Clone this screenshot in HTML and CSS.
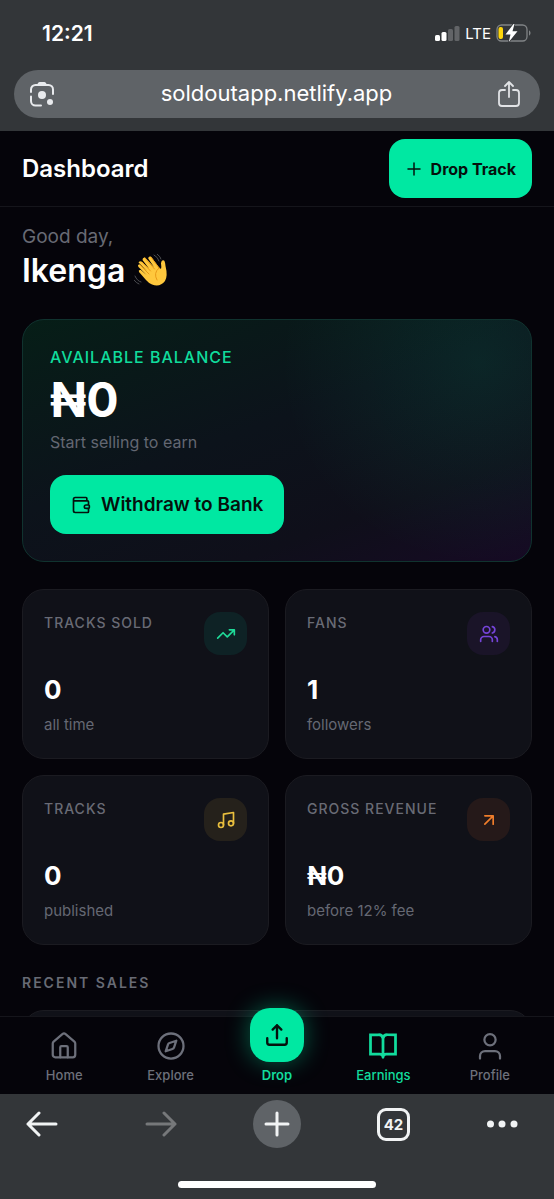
FILE: index.html
```html
<!DOCTYPE html>
<html lang="en">
<head>
<meta charset="utf-8">
<meta name="viewport" content="width=device-width, initial-scale=1">
<title>Dashboard</title>
<link rel="stylesheet" href="styles.css">
</head>
<body>
<div class="screen">
  <header class="browser-top">
    <div class="status">
      <time class="clock">12:21</time>
      <div class="signals">
        <svg width="25" height="16" viewBox="0 0 25 16" aria-hidden="true"><rect x="0" y="10" width="5" height="6" rx="1.5" fill="#fff"/><rect x="6.500" y="7" width="5" height="9" rx="1.500" fill="#fff"/><rect x="13" y="4" width="5" height="12" rx="1.500" fill="#626467"/><rect x="19.500" y="1" width="5" height="15" rx="1.500" fill="#626467"/></svg>
        <span>LTE</span>
        <svg width="36" height="18" viewBox="0 0 36 18" aria-hidden="true"><rect x="1" y="1" width="30" height="16" rx="4.500" fill="none" stroke="#818486" stroke-width="1.300"/><path d="M33 6.500c2 .6 2 4.400 0 5z" fill="#818486"/><rect x="2.500" y="3" width="4.500" height="12" rx="2" fill="#ffd60a"/><path d="M17.500 0 9.500 10.500h5L12.800 18l8.700-10.700h-5L18.500 0z" fill="#fff" stroke="#333639" stroke-width="1.500" paint-order="stroke"/></svg>
      </div>
    </div>
    <div class="address">
      <button class="bare" aria-label="Search with camera"><svg width="26" height="26" viewBox="0 0 26 26" fill="none" stroke="#e8eaed" stroke-width="2"><path d="M2 11V8.500A4.500 4.500 0 0 1 6.500 4h13A4.500 4.500 0 0 1 24 8.500V13M2 15.500V20a4.500 4.500 0 0 0 4.500 4.500H12" stroke-linecap="round"/><path d="M8 4q1-3 2.500-3h5Q17 1 18 4z" fill="#e8eaed" stroke="none"/><circle cx="13" cy="14" r="4" fill="#e8eaed" stroke="none"/><circle cx="21" cy="21" r="3" fill="#e8eaed" stroke="none"/></svg></button>
      <span class="url">soldoutapp.netlify.app</span>
      <button class="bare" aria-label="Share"><svg width="22" height="26" viewBox="0 0 22 26" fill="none" stroke="#e1e3e6" stroke-width="1.800" stroke-linecap="round" stroke-linejoin="round"><path d="M7 9H4a3 3 0 0 0-3 3v10a3 3 0 0 0 3 3h14a3 3 0 0 0 3-3V12a3 3 0 0 0-3-3h-3M11 16V1M7 5l4-4 4 4"/></svg></button>
    </div>
  </header>

  <header class="app-header">
    <h1>Dashboard</h1>
    <button class="primary drop-track"><svg width="18" height="18" viewBox="0 0 24 24" class="line"><path d="M4 12h16M12 4v16"/></svg>Drop Track</button>
  </header>

  <main class="content">
    <section class="greeting">
      <p>Good day,</p>
      <h2>Ikenga <svg class="wave" role="img" aria-label="waving hand" width="34" height="34" viewBox="0 0 34 34"><path d="M4.500 8.500Q6 6.500 8 8L15 14.500 8.500 6Q8.500 3 11 3.500L20 13 14.200 4.600Q14.500 1.800 17 2.800L25.500 14Q27.500 16 27.300 12.500L27 9.500Q27.500 5.500 30 6.500 31 7 31.500 12 34 22 31 27 26 33.500 18 30.500 15 29.500 12 26L5 18Q4 15.500 6.800 16L12.500 21 4.500 13Q3 10 6 10.500L14 17.500z" fill="#ffc83d"/><path d="m8 8 8.500 9M11 4l9.500 11M17 3l8 11M6 11l9 9M25 14q-6 5-2 12" fill="none" stroke="#e99a18" stroke-width="1" stroke-linecap="round"/><path d="M20 1q4 2 5 6M23 0q4 3 4 5M1 22q2 5 6 6M0 26q2 3 5 4" fill="none" stroke="#4b4c50" stroke-width="1" stroke-linecap="round"/></svg></h2>
    </section>

    <section class="balance">
      <h3>AVAILABLE BALANCE</h3>
      <p class="amount">₦0</p>
      <p class="note">Start selling to earn</p>
      <button class="primary withdraw"><svg width="20" height="20" viewBox="0 0 24 24" class="line"><path d="M19 7V4a1 1 0 0 0-1-1H5a2 2 0 0 0 0 4h15a1 1 0 0 1 1 1v4h-3a2 2 0 0 0 0 4h3a1 1 0 0 0 1-1v-2a1 1 0 0 0-1-1M3 5v14a2 2 0 0 0 2 2h15a1 1 0 0 0 1-1v-4"/></svg>Withdraw to Bank</button>
    </section>

    <section class="stats">
      <article class="card">
        <div class="card-head"><h3>TRACKS SOLD</h3><span class="badge green"><svg width="20" height="20" viewBox="0 0 24 24" class="line"><path d="m22 7-8.500 8.500-5-5L2 17M16 7h6v6"/></svg></span></div>
        <p class="value">0</p><p class="sub">all time</p>
      </article>
      <article class="card">
        <div class="card-head"><h3>FANS</h3><span class="badge purple"><svg width="20" height="20" viewBox="0 0 24 24" class="line"><path d="M16 21v-2a4 4 0 0 0-4-4H6a4 4 0 0 0-4 4v2M22 21v-2a4 4 0 0 0-3-3.870M16 3.130a4 4 0 0 1 0 7.750"/><circle cx="9" cy="7" r="4"/></svg></span></div>
        <p class="value">1</p><p class="sub">followers</p>
      </article>
      <article class="card">
        <div class="card-head"><h3>TRACKS</h3><span class="badge yellow"><svg width="20" height="20" viewBox="0 0 24 24" class="line"><path d="M9 18V5l12-2v13"/><circle cx="6" cy="18" r="3"/><circle cx="18" cy="16" r="3"/></svg></span></div>
        <p class="value">0</p><p class="sub">published</p>
      </article>
      <article class="card">
        <div class="card-head"><h3>GROSS REVENUE</h3><span class="badge orange"><svg width="20" height="20" viewBox="0 0 24 24" class="line"><path d="M7 7h10v10M7 17 17 7"/></svg></span></div>
        <p class="value">₦0</p><p class="sub">before 12% fee</p>
      </article>
    </section>

    <section class="recent">
      <h3>RECENT SALES</h3>
      <div class="sales-panel"></div>
    </section>
  </main>

  <nav class="tabs" aria-label="Main">
    <a href="#home"><svg width="30" height="30" viewBox="0 0 24 24" class="line thin"><path d="M15 21v-8a1 1 0 0 0-1-1h-4a1 1 0 0 0-1 1v8"/><path d="M3 10a2 2 0 0 1 .700-1.500l7-6a2 2 0 0 1 2.600 0l7 6A2 2 0 0 1 21 10v9a2 2 0 0 1-2 2H5a2 2 0 0 1-2-2z"/></svg>Home</a>
    <a href="#explore"><svg width="30" height="30" viewBox="0 0 24 24" class="line thin"><path d="m16.240 7.760-1.800 5.410a2 2 0 0 1-1.270 1.270l-5.410 1.800 1.800-5.410a2 2 0 0 1 1.270-1.270z"/><circle cx="12" cy="12" r="10"/></svg>Explore</a>
    <a href="#drop" class="active drop"><span class="drop-icon"><svg width="26" height="26" viewBox="0 0 24 24" class="line bold"><path d="M3 15v4a2 2 0 0 0 2 2h14a2 2 0 0 0 2-2v-4M16 7l-4-4-4 4M12 3v12"/></svg></span>Drop</a>
    <a href="#earnings" class="active"><svg width="30" height="30" viewBox="0 0 24 24" class="line bold book"><path d="M12 6v15M2 3h6.500A3.500 3.500 0 0 1 12 6a3.500 3.500 0 0 1 3.500-3H22v15.500h-7.500A2.500 2.500 0 0 0 12 21a2.500 2.500 0 0 0-2.500-2.500H2z"/></svg>Earnings</a>
    <a href="#profile"><svg width="30" height="30" viewBox="0 0 24 24" class="line thin"><path d="M20 22v-2a4 4 0 0 0-4-4H8a4 4 0 0 0-4 4v2"/><circle cx="12" cy="7" r="4.500"/></svg>Profile</a>
  </nav>

  <footer class="browser-bottom">
    <div class="tools">
      <button class="bare edge" aria-label="Back"><svg width="32" height="26" viewBox="0 0 32 26" class="tool"><path d="M30 13H2M13 2 2 13l11 11"/></svg></button>
      <button class="bare" aria-label="Forward" disabled><svg width="32" height="26" viewBox="0 0 32 26" class="tool dim"><path d="M2 13h28M19 2l11 11-11 11"/></svg></button>
      <button class="bare new-tab" aria-label="New tab"><svg width="26" height="26" viewBox="0 0 26 26" class="tool"><path d="M2 13h22M13 2v22"/></svg></button>
      <button class="bare" aria-label="Open tabs"><span class="tab-count">42</span></button>
      <button class="bare edge" aria-label="More"><svg width="32" height="26" viewBox="0 0 32 26" fill="#f1f3f4"><circle cx="4.500" cy="13" r="3.500"/><circle cx="16" cy="13" r="3.500"/><circle cx="28" cy="13" r="3.500"/></svg></button>
    </div>
    <div class="home-bar"></div>
  </footer>
</div>
</body>
</html>
```
FILE: styles.css
```css
* { box-sizing: border-box; }
body { margin: 0; background: #05040a; color: #fff; font-family: Inter, "Liberation Sans", sans-serif; }
h1, h2, h3, p { margin: 0; }
button { font: inherit; border: 0; }
svg { display: block; flex: none; }
a { color: inherit; text-decoration: none; }
.line { fill: none; stroke: currentColor; stroke-width: 2; stroke-linecap: round; stroke-linejoin: round; }
.thin { stroke-width: 1.800; }
.bold { stroke-width: 2.200; }
.book { stroke-linejoin: miter; }
.bare { padding: 0; background: none; color: inherit; display: grid; place-items: center; }

.screen { height: 100vh; display: grid; grid-template-rows: auto auto 1fr auto auto; }

.browser-top { background: #333639; padding: 15px 14px 13px; }
.status { height: 36px; padding: 0 8px 0 28px; display: flex; align-items: center; justify-content: space-between; }
.clock { font-size: 21px; font-weight: 600; }
.signals { display: flex; align-items: center; gap: 5px; font-size: 15px; }
.address { height: 48px; margin-top: 19px; padding: 0 20px 0 15px; border-radius: 24px; background: #5f6367; display: flex; align-items: center; justify-content: space-between; }
.url { font-size: 22px; line-height: 26px; padding-bottom: 2px; }

.app-header { height: 76px; padding: 0 22px; display: flex; align-items: center; justify-content: space-between; border-bottom: 1px solid #15151b; }
h1 { font-size: 24px; font-weight: 600; }
.primary { background: #00e8a2; color: #05110d; border-radius: 16px; height: 59px; display: flex; align-items: center; justify-content: center; font-weight: 600; }
.drop-track { padding: 0 16px; gap: 8px; font-size: 16px; font-weight: 700; }

.content { min-height: 0; overflow: hidden; padding: 17px 22px 0; }
.greeting p { font-size: 19px; line-height: 26px; color: #686a74; }
h2 { display: flex; align-items: center; gap: 9px; font-size: 32px; line-height: 42px; font-weight: 600; }

.balance { margin-top: 27px; padding: 26px 27px 27px; border: 1px solid #10332f; border-radius: 22px;
  background: radial-gradient(circle at 90% 18%, rgba(0, 232, 162, .09), transparent 40%), linear-gradient(160deg, #061e17 0%, #0c131b 45%, #0f0f1a 75%, #160a24 100%); }
.balance h3 { font-size: 16px; line-height: 22px; font-weight: 500; letter-spacing: 1px; color: #10dc9c; }
.amount { font-size: 48px; line-height: 56px; font-weight: 700; margin-top: 4px; }
.note { font-size: 16px; line-height: 24px; margin-top: 2px; color: #636772; }
.withdraw { margin-top: 21px; padding: 0 21px; gap: 10px; font-size: 19px; }

.stats { margin-top: 27px; display: grid; grid-template-columns: 1fr 1fr; gap: 16px; }
.card { height: 170px; padding: 22px 21px; border: 1px solid #1b1b21; border-radius: 22px; background: #101118; }
.card-head { height: 43px; display: flex; justify-content: space-between; align-items: flex-start; }
.card h3 { font-size: 14px; line-height: 21px; font-weight: 500; letter-spacing: 1px; color: #696b75; }
.badge { width: 43px; height: 43px; border-radius: 16px; display: grid; place-items: center; }
.green { background: #0e2225; color: #1fda98; }
.purple { background: #1a1428; color: #7544d8; }
.yellow { background: #25211b; color: #e9bf3e; }
.orange { background: #251919; color: #ef7d2b; }
.value { font-size: 26px; line-height: 32px; font-weight: 700; margin-top: 19px; }
.sub { font-size: 15px; line-height: 20px; margin-top: 9px; color: #656873; }

.recent { margin-top: 27px; }
.recent h3 { font-size: 14px; line-height: 21px; font-weight: 600; letter-spacing: 2px; color: #686b75; }
.sales-panel { height: 120px; margin-top: 17px; border: 1px solid #1b1b21; border-radius: 22px; background: #101118; }

.tabs { position: relative; height: 78px; padding: 0 11px 11px; display: flex; align-items: flex-end; border-top: 1px solid #15151b; background: #05040a; color: #6d707b; font-size: 13px; line-height: 16px; font-weight: 500; }
.tabs a { flex: 1; display: flex; flex-direction: column; align-items: center; gap: 6px; }
.tabs .active { color: #12dc9d; }
.tabs .drop { gap: 5px; font-weight: 600; }
.drop-icon { width: 54px; height: 54px; border-radius: 20px; background: #00e8a2; color: #05110d; display: grid; place-items: center; box-shadow: 0 0 24px rgba(0, 232, 162, .4); }

.browser-bottom { height: 105px; padding: 6px 26px 11px; background: #333639; display: flex; flex-direction: column; justify-content: space-between; }
.tools { display: grid; grid-template-columns: 42px 1fr 48px 1fr 42px; align-items: center; }
.edge { justify-items: start; }
.tool { fill: none; stroke: #f1f3f4; stroke-width: 3; stroke-linecap: round; stroke-linejoin: round; }
.dim { stroke: #76787a; }
.new-tab { width: 48px; height: 48px; border-radius: 50%; background: #5f6367; }
.tab-count { width: 33px; height: 33px; border: 3px solid #f1f3f4; border-radius: 9px; display: grid; place-items: center; font-size: 15px; font-weight: 700; color: #f1f3f4; }
.home-bar { width: 198px; height: 7px; margin: 0 auto; border-radius: 4px; background: #fff; }
```
